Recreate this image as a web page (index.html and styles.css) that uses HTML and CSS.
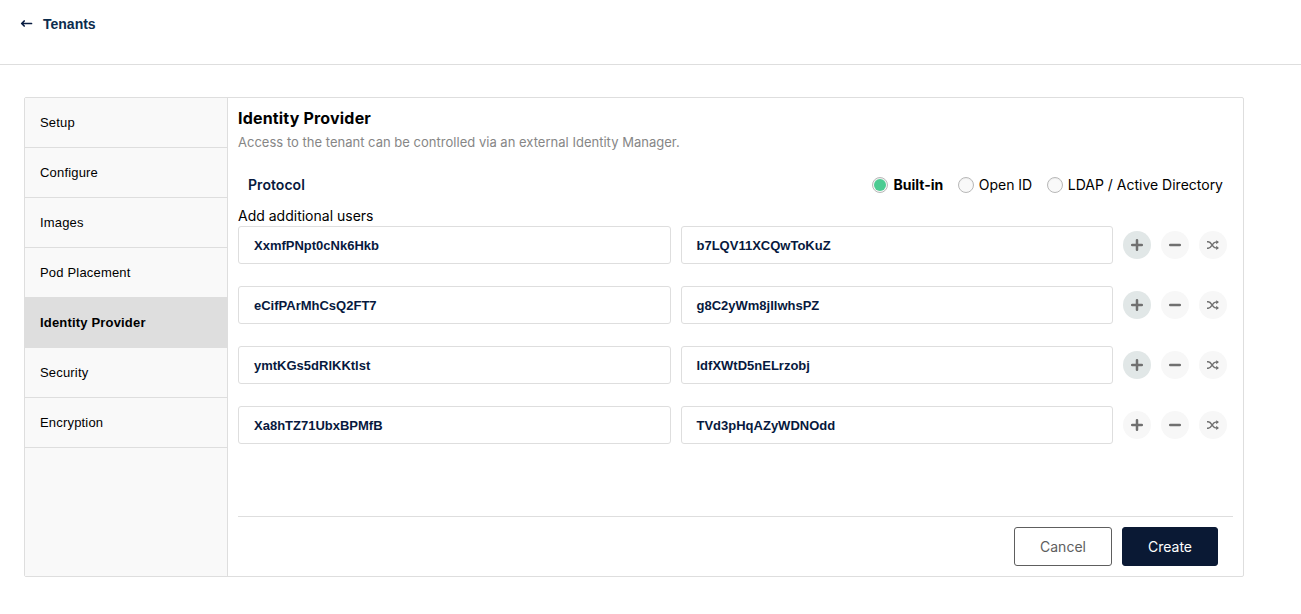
FILE: index.html
```html
<!DOCTYPE html>
<html lang="en">
<head>
<meta charset="utf-8">
<title>Tenants</title>
<link rel="stylesheet" href="styles.css">
</head>
<body>
<svg class="sprite" aria-hidden="true">
  <symbol id="plus" viewBox="0 0 12 12"><path d="M6 1.200v9.600M1.200 6h9.600" fill="none" stroke="currentColor" stroke-width="2.500" stroke-linecap="round"/></symbol>
  <symbol id="minus" viewBox="0 0 12 12"><path d="M1.200 6h9.600" fill="none" stroke="currentColor" stroke-width="2.500" stroke-linecap="round"/></symbol>
  <symbol id="shuffle" viewBox="0 0 12 10"><path d="M0 1.800h1.200C4.800 1.800 5.300 7.900 8.600 7.900h2.200M0 8.200h1.200C4.800 8.200 5.300 2.100 8.600 2.100h2.200" fill="none" stroke="currentColor" stroke-width="1.400"/><path d="M9.200 .2L12 2.100 9.200 4.200zM9.200 5.800L12 7.900 9.200 10z" fill="currentColor"/></symbol>
</svg>
<header class="topbar">
  <a class="back">
    <svg class="arrow" viewBox="0 0 13 9"><path d="M11.500 4.500H2M4.200 2L1.700 4.500l2.500 2.500" fill="none" stroke="currentColor" stroke-width="1.700" stroke-linecap="round" stroke-linejoin="round"/></svg>
    <span>Tenants</span>
  </a>
</header>
<main class="wizard">
  <nav class="steps">
    <a class="step">Setup</a>
    <a class="step">Configure</a>
    <a class="step">Images</a>
    <a class="step">Pod Placement</a>
    <a class="step selected">Identity Provider</a>
    <a class="step">Security</a>
    <a class="step">Encryption</a>
  </nav>
  <section class="content">
    <h1 class="title">Identity Provider</h1>
    <p class="description">Access to the tenant can be controlled via an external Identity Manager.</p>
    <div class="protocol">
      <span class="protocol-label">Protocol</span>
      <div class="options">
        <label class="option checked"><span class="radio"></span><span class="name">Built-in</span></label>
        <label class="option"><span class="radio"></span><span class="name">Open ID</span></label>
        <label class="option"><span class="radio"></span><span class="name">LDAP / Active Directory</span></label>
      </div>
    </div>
    <div class="users-label">Add additional users</div>
    <div class="users">
      <div class="user">
        <div class="field"><span>XxmfPNpt0cNk6Hkb</span></div><div class="field"><span>b7LQV11XCQwToKuZ</span></div>
        <button class="round add"><svg class="icon"><use href="#plus"/></svg></button><button class="round"><svg class="icon"><use href="#minus"/></svg></button><button class="round"><svg class="icon shuffle"><use href="#shuffle"/></svg></button>
      </div>
      <div class="user">
        <div class="field"><span>eCifPArMhCsQ2FT7</span></div><div class="field"><span>g8C2yWm8jIlwhsPZ</span></div>
        <button class="round add"><svg class="icon"><use href="#plus"/></svg></button><button class="round"><svg class="icon"><use href="#minus"/></svg></button><button class="round"><svg class="icon shuffle"><use href="#shuffle"/></svg></button>
      </div>
      <div class="user">
        <div class="field"><span>ymtKGs5dRlKKtlst</span></div><div class="field"><span>ldfXWtD5nELrzobj</span></div>
        <button class="round add"><svg class="icon"><use href="#plus"/></svg></button><button class="round"><svg class="icon"><use href="#minus"/></svg></button><button class="round"><svg class="icon shuffle"><use href="#shuffle"/></svg></button>
      </div>
      <div class="user">
        <div class="field"><span>Xa8hTZ71UbxBPMfB</span></div><div class="field"><span>TVd3pHqAZyWDNOdd</span></div>
        <button class="round"><svg class="icon"><use href="#plus"/></svg></button><button class="round"><svg class="icon"><use href="#minus"/></svg></button><button class="round"><svg class="icon shuffle"><use href="#shuffle"/></svg></button>
      </div>
    </div>
    <footer class="actions">
      <button class="btn cancel">Cancel</button>
      <button class="btn create">Create</button>
    </footer>
  </section>
</main>
</body>
</html>
```
FILE: styles.css
```css
* { box-sizing: border-box; }
body { margin: 0; background: #fff; color: #000; font-family: Inter, sans-serif; font-size: 14px; }
span { white-space: nowrap; }
.sprite { display: none; }
.topbar { height: 65px; border-bottom: 1px solid #dedede; padding: 14px 20px; }
.back { display: inline-flex; align-items: center; gap: 10px; height: 20px; color: #0b2c4d; font: bold 14px/20px "Liberation Sans", sans-serif; }
.arrow { width: 13px; height: 9px; margin-top: -1px; color: #081c42; }
.wizard { display: flex; width: 1220px; height: 480px; margin: 32px 0 0 24px; border: 1px solid #dedede; border-radius: 2px; }
.steps { flex: 0 0 203px; border-right: 1px solid #dedede; background: #f9f9f9; }
.step { display: flex; align-items: center; height: 50px; padding: 0 15px; border-bottom: 1px solid #dedede; font: 13px/20px "Liberation Sans", sans-serif; letter-spacing: 0.18px; }
.step.selected { height: 51px; margin-top: -1px; padding-top: 1px; background: #dedede; font-weight: bold; }
.content { flex: 1; display: flex; flex-direction: column; padding: 10px; }
.title { margin: 0; font-size: 16px; line-height: 20px; font-weight: 700; letter-spacing: 0.18px; }
.description { margin: 5px 0 0; color: #868686; font-size: 13px; line-height: 18px; letter-spacing: 0.015px; }
.protocol { display: flex; justify-content: space-between; align-items: center; height: 24px; margin-top: 22px; padding: 0 10px; }
.protocol-label { padding-bottom: 2px; color: #07193e; font-weight: 600; letter-spacing: 0.05px; }
.options { display: flex; gap: 14.500px; }
.option { display: flex; align-items: center; gap: 5px; }
.option .name { padding-bottom: 2px; }
.radio { display: flex; align-items: center; justify-content: center; width: 16px; height: 16px; border: 1px solid #b8b8b8; border-radius: 50%; background: #f9f9f9; box-shadow: inset 0 1px 1px #0000000d; }
.checked .name { font-weight: 700; }
.checked .radio::after { content: ""; width: 12px; height: 12px; border-radius: 50%; background: #4ccb92; }
.users-label { height: 20px; margin-top: 9px; line-height: 20px; }
.users { display: grid; gap: 22px; }
.user { display: flex; align-items: center; gap: 10px; padding-right: 6px; }
.field { display: flex; align-items: center; flex: 1; height: 38px; padding: 2px 15px 0; border: 1px solid #dedede; border-radius: 3px; color: #07193e; font: bold 13px/20px "Liberation Sans", sans-serif; }
.round { display: flex; align-items: center; justify-content: center; width: 28px; height: 28px; padding: 0; border: 0; border-radius: 50%; background: #f7f7f7; color: #707070; }
.round.add { background: #e1e7e7; }
.icon { width: 12px; height: 12px; }
.icon.shuffle { width: 12px; height: 10px; }
.actions { display: flex; justify-content: flex-end; gap: 10px; height: 60px; margin-top: auto; padding: 10px 15px 0 0; border-top: 1px solid #dedede; margin-bottom: -10px; }
.btn { height: 39px; padding: 0; border-radius: 3px; font: 14px Inter, sans-serif; }
.cancel { width: 98px; border: 1px solid #5e5e5e; background: #fff; color: #5e5e5e; }
.create { width: 96px; border: 1px solid #0a1934; background: #0a1934; color: #fff; }
```
